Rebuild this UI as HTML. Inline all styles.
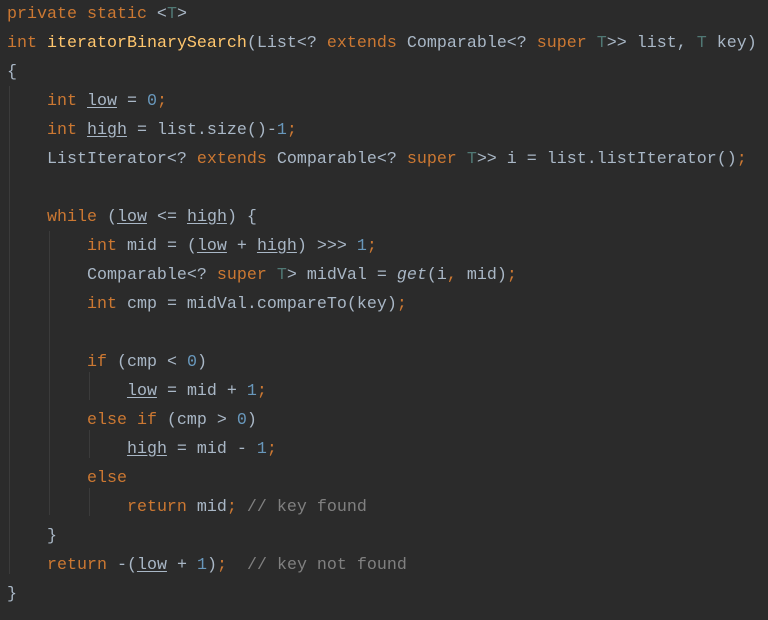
<!DOCTYPE html>
<html><head><meta charset="utf-8"><style>
html,body{margin:0;padding:0;background:#2b2b2b;width:768px;height:620px;overflow:hidden}
pre{position:absolute;left:7px;top:0px;margin:0;font-family:"Liberation Mono",monospace;font-size:16.67px;line-height:29px;color:#a9b7c6}
.k{color:#cc7832}.n{color:#6897bb}.c{color:#808080}.t{color:#507874}.f{color:#ffc66d}.i{font-style:italic}
.u{text-decoration:underline;text-underline-offset:2px}
.g{position:absolute;width:1px;background:#3b3b3b}
</style></head><body>
<div class="g" style="left:9px;top:86px;height:488px"></div>
<div class="g" style="left:49px;top:231px;height:284px"></div>
<div class="g" style="left:89px;top:372px;height:28px"></div>
<div class="g" style="left:89px;top:430px;height:28px"></div>
<div class="g" style="left:89px;top:488px;height:28px"></div>
<pre><span class="k">private static</span> &lt;<span class="t">T</span>&gt;
<span class="k">int</span> <span class="f">iteratorBinarySearch</span>(List&lt;? <span class="k">extends</span> Comparable&lt;? <span class="k">super</span> <span class="t">T</span>&gt;&gt; list, <span class="t">T</span> key)
{
    <span class="k">int</span> <span class="u">low</span> = <span class="n">0</span><span class="k">;</span>
    <span class="k">int</span> <span class="u">high</span> = list.size()-<span class="n">1</span><span class="k">;</span>
    ListIterator&lt;? <span class="k">extends</span> Comparable&lt;? <span class="k">super</span> <span class="t">T</span>&gt;&gt; i = list.listIterator()<span class="k">;</span>

    <span class="k">while</span> (<span class="u">low</span> &lt;= <span class="u">high</span>) {
        <span class="k">int</span> mid = (<span class="u">low</span> + <span class="u">high</span>) &gt;&gt;&gt; <span class="n">1</span><span class="k">;</span>
        Comparable&lt;? <span class="k">super</span> <span class="t">T</span>&gt; midVal = <span class="i">get</span>(i<span class="k">,</span> mid)<span class="k">;</span>
        <span class="k">int</span> cmp = midVal.compareTo(key)<span class="k">;</span>

        <span class="k">if</span> (cmp &lt; <span class="n">0</span>)
            <span class="u">low</span> = mid + <span class="n">1</span><span class="k">;</span>
        <span class="k">else if</span> (cmp &gt; <span class="n">0</span>)
            <span class="u">high</span> = mid - <span class="n">1</span><span class="k">;</span>
        <span class="k">else</span>
            <span class="k">return</span> mid<span class="k">;</span> <span class="c">// key found</span>
    }
    <span class="k">return</span> -(<span class="u">low</span> + <span class="n">1</span>)<span class="k">;</span>  <span class="c">// key not found</span>
}</pre>
</body></html>
